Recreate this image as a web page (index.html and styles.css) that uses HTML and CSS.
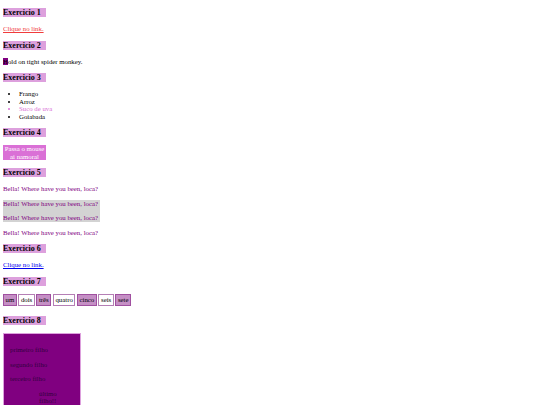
FILE: index.html
```html
<!DOCTYPE html>
<html>
<head>
<meta charset="utf-8">
<link rel="stylesheet" href="styles.css">
</head>
<body>
<h3 class="titulo">Exercicio 1</h3>
<a class="link-vermelho" href="#">Clique no link.</a>
<h3 class="titulo">Exercicio 2</h3>
<p class="letra">Hold on tight spider monkey.</p>
<h3 class="titulo">Exercicio 3</h3>
<ul class="lista">
  <li>Frango</li>
  <li>Arroz</li>
  <li>Suco de uva</li>
  <li>Goiabada</li>
</ul>
<h3 class="titulo">Exercicio 4</h3>
<div class="hover-box">Passa o mouse ai namoral</div>
<h3 class="titulo">Exercicio 5</h3>
<p class="bella">Bella! Where have you been, loca?</p>
<div class="cinza">
  <p class="bella">Bella! Where have you been, loca?</p>
  <p class="bella">Bella! Where have you been, loca?</p>
</div>
<p class="bella">Bella! Where have you been, loca?</p>
<h3 class="titulo">Exercicio 6</h3>
<a class="link-azul" href="#">Clique no link.</a>
<h3 class="titulo">Exercicio 7</h3>
<div class="numeros">
  <span class="num cheio">um</span>
  <span class="num vazio">dois</span>
  <span class="num cheio">três</span>
  <span class="num vazio">quatro</span>
  <span class="num cheio">cinco</span>
  <span class="num vazio">seis</span>
  <span class="num cheio">sete</span>
</div>
<h3 class="titulo">Exercicio 8</h3>
<div class="pai">
  <p class="filho">primeiro filho</p>
  <p class="filho">segundo filho</p>
  <p class="filho">terceiro filho</p>
  <p class="filho ultimo">último filho!!</p>
</div>
</body>
</html>
```
FILE: styles.css
```css
body {
  margin: 3px;
  font-family: "Liberation Serif", "Times New Roman", serif;
  font-size: 6.8px;
  line-height: 7.5px;
  color: #000;
  background: #fff;
}
p {
  margin: 7px 0;
}
.titulo {
  width: 43px;
  background: #dda0dd;
  font-size: 8px;
  line-height: 9px;
  margin: 8px 0;
}
.titulo:first-child {
  margin-top: 5px;
}
.link-vermelho {
  color: #f03c3c;
}
.link-azul {
  color: #0000ee;
}
.letra::first-letter {
  background: #800080;
}
.lista {
  margin: 8px 0;
  padding-left: 16px;
}
.lista li:nth-child(3) {
  color: #da70d6;
}
.hover-box {
  width: 43px;
  background: #da70d6;
  color: #fff;
  text-align: center;
}
.bella {
  color: #800080;
}
.cinza {
  width: fit-content;
  padding-right: 2px;
  background: #d3d3d3;
}
.numeros {
  margin: 8px 0 10px;
  line-height: 7.5px;
}
.num {
  display: inline-block;
  padding: 1.5px 1.5px;
  border: 1px solid #a050a0;
}
.cheio {
  background: #c58fc5;
}
.vazio {
  background: #fff;
  border-color: #b57fb5;
}
.pai {
  width: 64px;
  background: #800080;
  border: 1px solid #dda0dd;
  padding: 5px 6px;
}
.filho {
  color: #33003f;
}
.ultimo {
  margin-left: 29px;
  width: 25px;
}
```
